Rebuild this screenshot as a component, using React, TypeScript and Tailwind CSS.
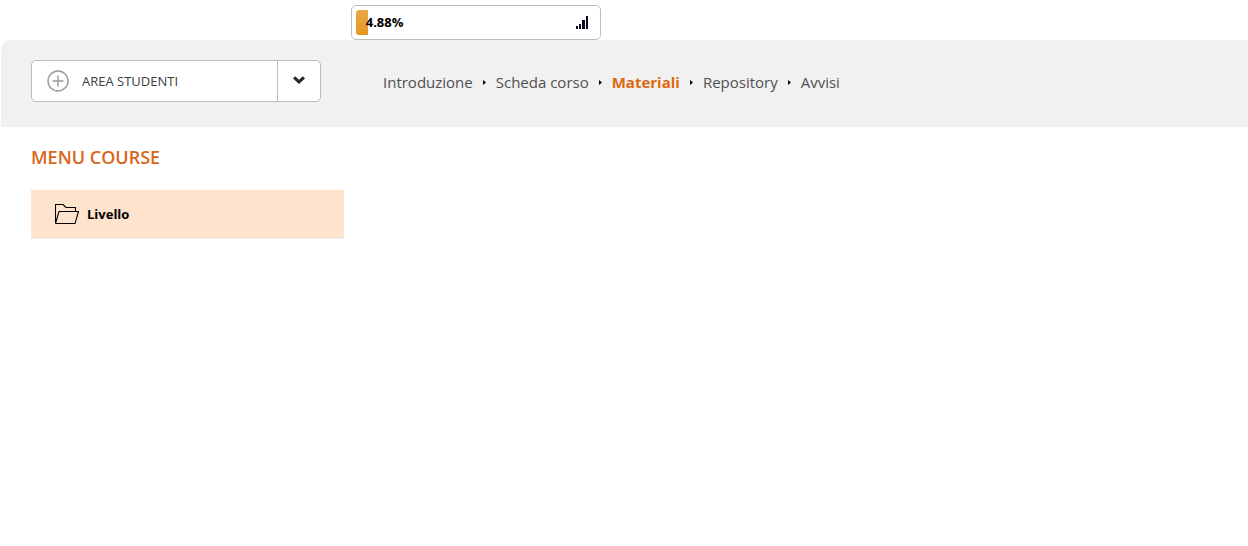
import React from "react";

const steps = [
  { label: "Introduzione", current: false },
  { label: "Scheda corso", current: false },
  { label: "Materiali", current: true },
  { label: "Repository", current: false },
  { label: "Avvisi", current: false },
];

const progress = 4.88;

function SignalIcon() {
  return (
    <svg width="12" height="13" viewBox="0 0 12 13" fill="#0b0620" shapeRendering="crispEdges" aria-hidden="true">
      <rect x="0" y="10" width="2" height="3" />
      <rect x="3" y="8" width="2" height="5" />
      <rect x="6" y="4" width="3" height="9" />
      <rect x="10" y="0" width="2" height="13" />
    </svg>
  );
}

function PlusCircleIcon() {
  return (
    <svg width="22" height="22" viewBox="0 0 22 22" fill="none" stroke="#999999" strokeWidth="1.4" aria-hidden="true">
      <circle cx="11" cy="11" r="10" />
      <path d="M5.5 11h11M11 5.5v11" />
    </svg>
  );
}

function ChevronIcon() {
  return (
    <svg width="12" height="8" viewBox="0 0 12 8" fill="#2b2b2b" aria-hidden="true">
      <path d="M2.2 0.2 6 3.8 9.8 0.2 12 2.4 6 8 0 2.4Z" />
    </svg>
  );
}

function FolderIcon() {
  return (
    <svg width="24" height="20" viewBox="0 0 24 20" fill="none" stroke="#000000" strokeWidth="1.1" aria-hidden="true">
      <path d="M0.5 19.5V0.5H8L11 3.5H20.5V7.5M0.5 19.5H20L23.5 7.5H4L0.5 19.5" />
    </svg>
  );
}

export default function App() {
  return (
    <div className="min-h-screen bg-white pl-px font-['Open_Sans',sans-serif]">
      <div className="flex pt-[5px] pl-[350px]">
        <div className="flex h-[35px] w-[250px] items-center rounded-[5px] border border-[#bcbcbc] bg-white p-1">
          <div
            className="h-[25px] shrink-0 rounded-l-[3px] bg-linear-to-b from-[#eba745] to-[#e69521]"
            style={{ width: `${progress}%` }}
            role="progressbar"
            aria-label="Avanzamento"
            aria-valuenow={progress}
            aria-valuemin={0}
            aria-valuemax={100}
          />
          <span className="-ml-0.5 grow pb-0.5 text-[13px] leading-5 font-bold text-black">{progress}%</span>
          <span className="mr-2">
            <SignalIcon />
          </span>
        </div>
      </div>

      <header className="flex items-start rounded-tl-[10px] bg-[#f1f1f1] pt-5 pb-[25px] pl-[30px]">
        <div className="flex h-[42px] w-[290px] shrink-0 rounded-[5px] border border-[#bcbcbc] bg-white">
          <button type="button" className="flex grow items-center gap-[13px] pl-[15px] text-[13px] leading-5 font-normal text-[#3d3d3d]">
            <PlusCircleIcon />
            AREA STUDENTI
          </button>
          <button
            type="button"
            aria-label="Apri elenco corsi"
            className="flex w-[43px] items-center justify-center border-l border-[#bcbcbc] pb-0.5"
          >
            <ChevronIcon />
          </button>
        </div>
        <nav aria-label="Sezioni del corso" className="ml-[30px] grow border-b border-[#eeeeee] pt-3 pb-[6px] pl-8">
          <ul className="flex items-center text-[15px] leading-5">
            {steps.map((step, i) => (
              <li key={step.label} className="flex items-center">
                {i > 0 && (
                  <svg className="mx-[10px]" width="3" height="5" viewBox="0 0 3 5" fill="#000000" aria-hidden="true">
                    <path d="M0 0 3 2.5 0 5Z" />
                  </svg>
                )}
                <a
                  href="#"
                  aria-current={step.current ? "page" : undefined}
                  className={step.current ? "font-bold text-[#dc6a10]" : "font-normal text-[#505050]"}
                >
                  {step.label}
                </a>
              </li>
            ))}
          </ul>
        </nav>
      </header>

      <main className="px-[30px] pt-[18px]">
        <h1 className="text-lg leading-6 font-semibold text-[#d9661a]">MENU COURSE</h1>
        <ul className="mt-[21px] w-[313px]">
          <li className="border-b border-[#ececec] bg-[#fee3cd]">
            <a href="#" className="flex h-12 items-center gap-2 pl-6 text-[13px] leading-5 font-bold text-black">
              <FolderIcon />
              Livello
            </a>
          </li>
        </ul>
      </main>
    </div>
  );
}
